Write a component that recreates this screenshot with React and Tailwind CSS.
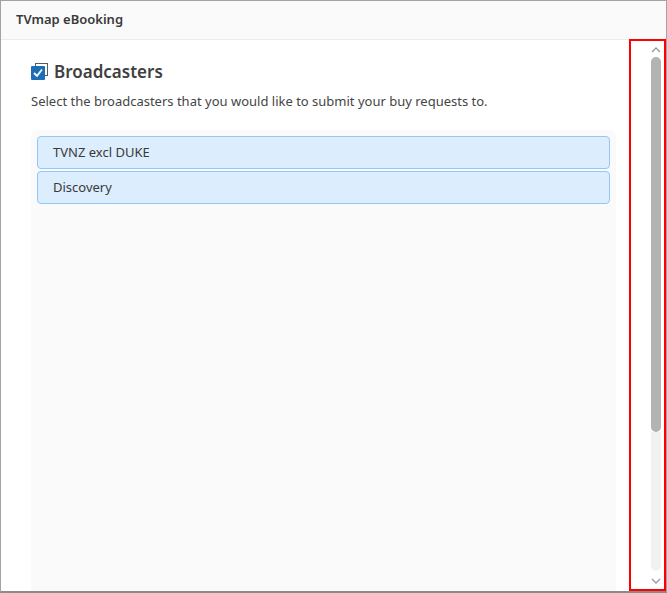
export default function App() {
  const font = { fontFamily: '"Noto Sans", "Open Sans", sans-serif' };
  return (
    <div className="w-[667px] h-[593px] bg-white flex flex-col border-l border-t border-r border-[#a3a3a3] border-b-2 border-b-[#8a8a8a] overflow-hidden" style={font}>
      <div className="h-[39px] shrink-0 bg-[#fafafa] border-b border-[#ececec] flex items-center pl-[15px] text-[13px] font-semibold text-[#3a3a3a]">
        TVmap eBooking
      </div>
      <div className="flex-1 flex min-h-0">
        <div className="flex-1 flex flex-col pl-[30px] pr-[13px] pt-[19px] min-w-0">
          <div className="flex items-center gap-[5px] h-[24px]">
            <svg width="18" height="20" viewBox="0 0 18 20">
              <rect x="4.5" y="2.5" width="12" height="12" fill="white" stroke="#5a5a5a" strokeWidth="1" />
              <rect x="0" y="5" width="14" height="14" rx="1" fill="#1c6fb6" />
              <path d="M3 12 L6 15 L11 8.5" fill="none" stroke="white" strokeWidth="1.8" />
            </svg>
            <span className="text-[17px] font-semibold text-[#404040] leading-none">Broadcasters</span>
          </div>
          <div className="mt-[9px] text-[13px] text-[#454545] leading-[18px]">
            Select the broadcasters that you would like to submit your buy requests to.
          </div>
          <div className="mt-[20px] flex-1 bg-[#fafafa] rounded-t-[6px] px-[6px] pt-[6px] flex flex-col gap-[2px]">
            <div className="h-[33px] rounded-[4px] bg-[#dcedfd] border border-[#92c7f6] flex items-center pl-[15px] text-[13px] text-[#3a3a3a]">
              TVNZ excl DUKE
            </div>
            <div className="h-[33px] rounded-[4px] bg-[#dcedfd] border border-[#92c7f6] flex items-center pl-[15px] text-[13px] text-[#3a3a3a]">
              Discovery
            </div>
          </div>
        </div>
        <div className="w-[37px] shrink-0 border-2 border-[#ff0000] flex flex-col items-end pr-[3px] -mt-[1px]">
          <div className="h-[14px] w-[10px] flex items-center justify-center mt-[2px]">
            <svg width="10" height="6" viewBox="0 0 10 6">
              <path d="M1 5 L5 1 L9 5" fill="none" stroke="#9a9a9a" strokeWidth="1.3" />
            </svg>
          </div>
          <div className="w-[10px] flex-1 flex flex-col">
            <div className="h-[375px] bg-[#b3b3b3] rounded-full" />
            <div className="flex-1 bg-[#f1f1f1] rounded-b-full mb-[2px]" />
          </div>
          <div className="h-[16px] w-[10px] flex items-center justify-center">
            <svg width="10" height="6" viewBox="0 0 10 6">
              <path d="M1 1 L5 5 L9 1" fill="none" stroke="#9a9a9a" strokeWidth="1.3" />
            </svg>
          </div>
        </div>
      </div>
    </div>
  );
}
